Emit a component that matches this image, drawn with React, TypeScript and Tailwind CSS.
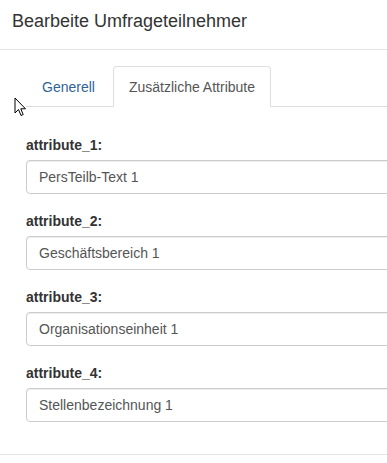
import React from 'react';

const fields = [
  { label: 'attribute_1:', value: 'PersTeilb-Text 1' },
  { label: 'attribute_2:', value: 'Geschäftsbereich 1' },
  { label: 'attribute_3:', value: 'Organisationseinheit 1' },
  { label: 'attribute_4:', value: 'Stellenbezeichnung 1' },
];

// Mauszeiger, wie er im Screenshot über dem Tab liegt
function Cursor() {
  return (
    <svg className="absolute left-[14px] top-[97px]" width="13" height="21" viewBox="0 0 13 21">
      <path
        d="M1 1 L1 16 L4.5 12.5 L7 18.5 L9.2 17.6 L6.8 11.8 L11.5 11.8 Z"
        fill="#fff"
        stroke="#000"
        strokeWidth="1"
        strokeLinejoin="miter"
      />
    </svg>
  );
}

export default function App() {
  return (
    <div className="relative w-[387px] h-[463px] overflow-hidden bg-white text-[#333] font-['Liberation_Sans',Arial,sans-serif]">
      {/* Header */}
      <div className="h-[50px] border-b border-[#e5e5e5] px-[12px] pt-[8px]">
        <h4 className="text-[18px] leading-[26px] text-[#333]">Bearbeite Umfrageteilnehmer</h4>
      </div>

      {/* Body */}
      <div className="pl-[26px] pt-[16px] pb-[15px] border-b border-[#e5e5e5] w-[430px]">
        <ul className="flex border-b border-[#ddd] text-[14px] leading-[20px]">
          <li className="mb-[-1px] mr-[2px]">
            <a className="block h-[41px] border border-transparent rounded-t-[4px] px-[15px] pt-[10px] text-[#2f6496]">
              Generell
            </a>
          </li>
          <li className="mb-[-1px]">
            <a className="block h-[41px] border border-[#ddd] border-b-transparent bg-white rounded-t-[4px] px-[15px] pt-[10px] text-[#555]">
              Zusätzliche Attribute
            </a>
          </li>
        </ul>

        <div className="pt-[28px]">
          {fields.map((f) => (
            <div key={f.label} className="mb-[17px]">
              <label className="block font-bold text-[14px] leading-[20px] mb-[5px] text-[#333]">{f.label}</label>
              <div className="h-[34px] w-[420px] border border-[#ccc] rounded-[4px] px-[12px] text-[14px] leading-[32px] text-[#555] shadow-[inset_0_1px_1px_rgba(0,0,0,0.075)]">
                {f.value}
              </div>
            </div>
          ))}
        </div>
      </div>

      <Cursor />
    </div>
  );
}
